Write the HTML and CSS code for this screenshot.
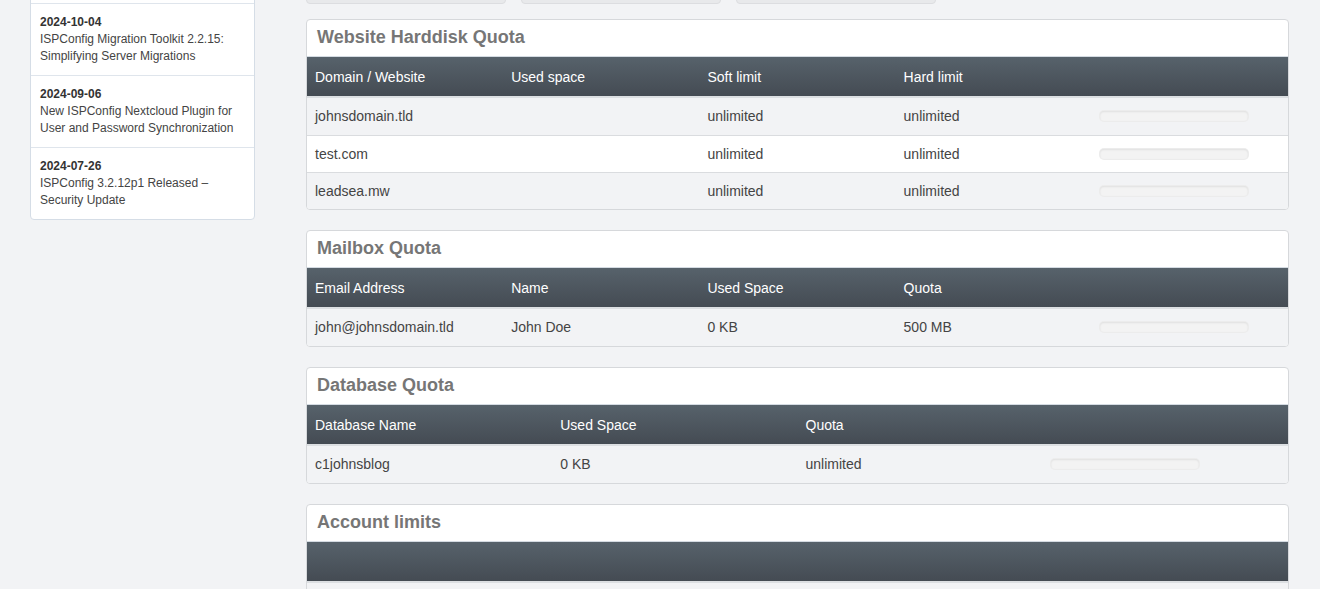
FILE: index.html
```html
<!DOCTYPE html>
<html lang="en">
<head>
    <meta charset="UTF-8">
    <title>Dashboard</title>
    <link rel="stylesheet" href="styles.css">
</head>
<body>

<div class="page">
    <div class="sidebar">
        <ul class="news">
            <li>
                <b>2024-10-21</b>
                <span>ISPConfig 3.2.12p2 Released &ndash; Bugfix Update</span>
            </li>
            <li>
                <b>2024-10-04</b>
                <span>ISPConfig Migration Toolkit 2.2.15: Simplifying Server Migrations</span>
            </li>
            <li>
                <b>2024-09-06</b>
                <span>New ISPConfig Nextcloud Plugin for User and Password Synchronization</span>
            </li>
            <li>
                <b>2024-07-26</b>
                <span>ISPConfig 3.2.12p1 Released &ndash; Security Update</span>
            </li>
        </ul>
    </div>

    <div class="main">
        <div class="buttons">
            <div class="btn"></div>
            <div class="btn"></div>
            <div class="btn"></div>
        </div>

        <div class="panel">
            <h2>Website Harddisk Quota</h2>
            <table class="cols-5">
                <thead>
                    <tr><th>Domain / Website</th><th>Used space</th><th>Soft limit</th><th>Hard limit</th><th></th></tr>
                </thead>
                <tbody>
                    <tr><td>johnsdomain.tld</td><td></td><td>unlimited</td><td>unlimited</td><td><div class="bar"></div></td></tr>
                    <tr><td>test.com</td><td></td><td>unlimited</td><td>unlimited</td><td><div class="bar"></div></td></tr>
                    <tr><td>leadsea.mw</td><td></td><td>unlimited</td><td>unlimited</td><td><div class="bar"></div></td></tr>
                </tbody>
            </table>
        </div>

        <div class="panel">
            <h2>Mailbox Quota</h2>
            <table class="cols-5">
                <thead>
                    <tr><th>Email Address</th><th>Name</th><th>Used Space</th><th>Quota</th><th></th></tr>
                </thead>
                <tbody>
                    <tr><td>john@johnsdomain.tld</td><td>John Doe</td><td>0 KB</td><td>500 MB</td><td><div class="bar"></div></td></tr>
                </tbody>
            </table>
        </div>

        <div class="panel">
            <h2>Database Quota</h2>
            <table>
                <thead>
                    <tr><th>Database Name</th><th>Used Space</th><th>Quota</th><th></th></tr>
                </thead>
                <tbody>
                    <tr><td>c1johnsblog</td><td>0 KB</td><td>unlimited</td><td><div class="bar"></div></td></tr>
                </tbody>
            </table>
        </div>

        <div class="panel">
            <h2>Account limits</h2>
            <table>
                <thead>
                    <tr><th></th><th></th><th></th><th></th></tr>
                </thead>
                <tbody>
                    <tr><td>&nbsp;</td><td></td><td></td><td><div class="bar"></div></td></tr>
                </tbody>
            </table>
        </div>
    </div>
</div>

</body>
</html>
```

FILE: styles.css
```css
body {
    margin: 0;
    background-color: #f2f3f5;
    font-family: "Liberation Sans", Arial, sans-serif;
    color: #3d3d3d;
    overflow: hidden;
}

.page {
    display: flex;
    gap: 51px;
    padding: 0 31px 0 30px;
}

.sidebar {
    width: 225px;
    flex-shrink: 0;
}

.news {
    list-style: none;
    margin: -69px 0 0 0;
    padding: 0;
    background-color: #fff;
    border: 1px solid #d5dde6;
    border-radius: 4px;
}

.news li {
    padding: 10px 9px 10px;
    font-size: 12px;
    line-height: 17px;
    border-top: 1px solid #dfe5ec;
}

.news li:first-child {
    border-top: none;
}

.news b {
    display: block;
    color: #333;
}

.news span {
    display: block;
    color: #444;
}

.main {
    width: 983px;
    flex-shrink: 0;
}

.buttons {
    display: flex;
    gap: 15px;
    margin-top: -27px;
    margin-bottom: 15px;
}

.btn {
    width: 198px;
    height: 29px;
    background-color: #e8e9eb;
    border: 1px solid #dcdde0;
    border-radius: 4px;
}

.panel {
    background-color: #fff;
    border: 1px solid #d6d8db;
    border-radius: 4px;
    margin-bottom: 20px;
    overflow: hidden;
}

.panel h2 {
    margin: 0;
    height: 36px;
    line-height: 34px;
    padding: 0 10px;
    font-size: 18px;
    font-weight: bold;
    color: #767676;
    border-bottom: 1px solid #d4dbe2;
}

table {
    width: 100%;
    border-collapse: collapse;
    table-layout: fixed;
    font-size: 14px;
}

th {
    height: 37px;
    padding: 1px 8px 1px;
    text-align: left;
    font-weight: normal;
    color: #fff;
    background: linear-gradient(#57626b, #444b53);
    border-bottom: 2px solid #dcdfe2;
}

td {
    height: 35px;
    padding: 0 8px 1px;
    border-top: 1px solid #dadcdf;
    color: #444;
}

tbody tr:first-child td {
    height: 36px;
    border-top: none;
}

tbody tr:nth-child(odd) {
    background-color: #f2f3f5;
}

tbody tr:nth-child(even) {
    background-color: #fff;
}

.bar {
    width: 148px;
    height: 10px;
    background-color: #f3f3f3;
    border-radius: 4px;
    box-shadow: inset 0 1px 2px rgba(0, 0, 0, 0.08), 0 0 0 1px #ececec;
}
```
